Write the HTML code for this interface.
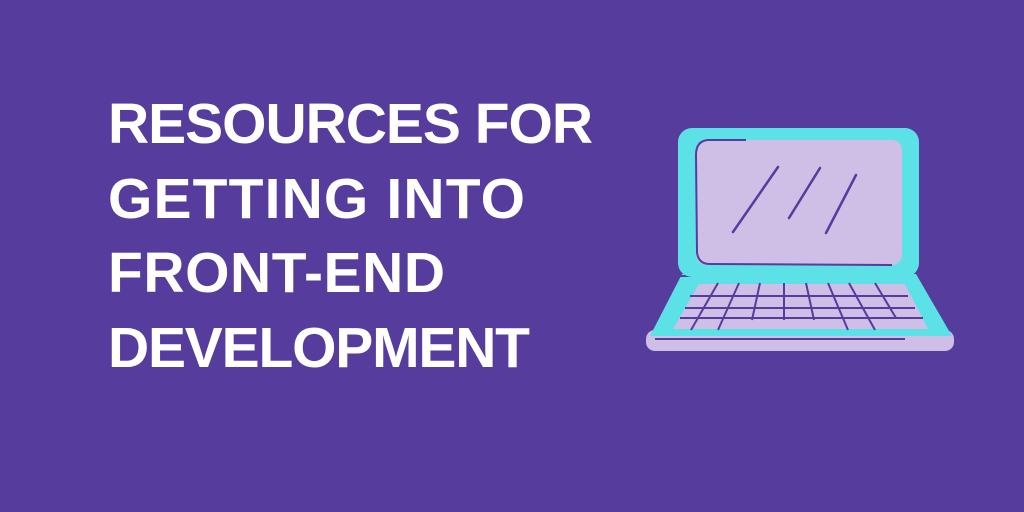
<!DOCTYPE html>
<html><head><style>
html,body{margin:0;padding:0;background:#563c9c;}
svg{display:block}
</style></head><body>
<svg width="1024" height="512" viewBox="0 0 1024 512" xmlns="http://www.w3.org/2000/svg">
<rect width="1024" height="512" fill="#563c9c"/>
<g font-family="Liberation Sans, sans-serif" font-weight="bold" font-size="57" fill="#ffffff">
<text x="108" y="143" textLength="485" lengthAdjust="spacing">RESOURCES FOR</text>
<text x="108" y="218" textLength="417" lengthAdjust="spacing">GETTING INTO</text>
<text x="108" y="292" textLength="337" lengthAdjust="spacing">FRONT-END</text>
<text x="108" y="367" textLength="422" lengthAdjust="spacing">DEVELOPMENT</text>
</g>
<!-- laptop -->
<rect x="646" y="330" width="308" height="21" rx="9" fill="#cfbfe6"/>
<path d="M682 274 L916 274 L952 336 L650 336 Z" fill="#5ce1e6"/>
<path d="M699 284 L905 284 L928 329 L673 329 Z" fill="#cfbfe6"/>
<g stroke="#563c9c" stroke-width="2" fill="none">
<line x1="690" y1="296" x2="908" y2="296"/>
<line x1="685" y1="308" x2="915" y2="308"/>
<line x1="680" y1="318" x2="923" y2="318"/>
<line x1="718" y1="283" x2="691" y2="330"/>
<line x1="739" y1="283" x2="718" y2="330"/>
<line x1="760" y1="283" x2="752" y2="320"/>
<line x1="784" y1="283" x2="784" y2="320"/>
<line x1="806" y1="283" x2="814" y2="320"/>
<line x1="828" y1="283" x2="848" y2="330"/>
<line x1="849" y1="283" x2="875" y2="330"/>
<line x1="875" y1="283" x2="896" y2="318"/>
<line x1="655" y1="339" x2="905" y2="339"/>
<line x1="680" y1="276" x2="907" y2="275"/>
</g>
<rect x="678" y="128" width="241" height="149" rx="14" fill="#5ce1e6"/>
<rect x="696" y="140" width="206" height="125" rx="10" fill="#cfbfe6"/>
<path d="M746 140 L708 140 Q696 141 696 155 L697 252 Q698 264 710 264 L892 265" stroke="#563c9c" stroke-width="2" fill="none"/>
<g stroke="#563c9c" stroke-width="2.5" stroke-linecap="round">
<line x1="778" y1="167" x2="733" y2="232"/>
<line x1="820" y1="168" x2="789" y2="218"/>
<line x1="856" y1="175" x2="826" y2="233"/>
</g>
</svg>
</body></html>
